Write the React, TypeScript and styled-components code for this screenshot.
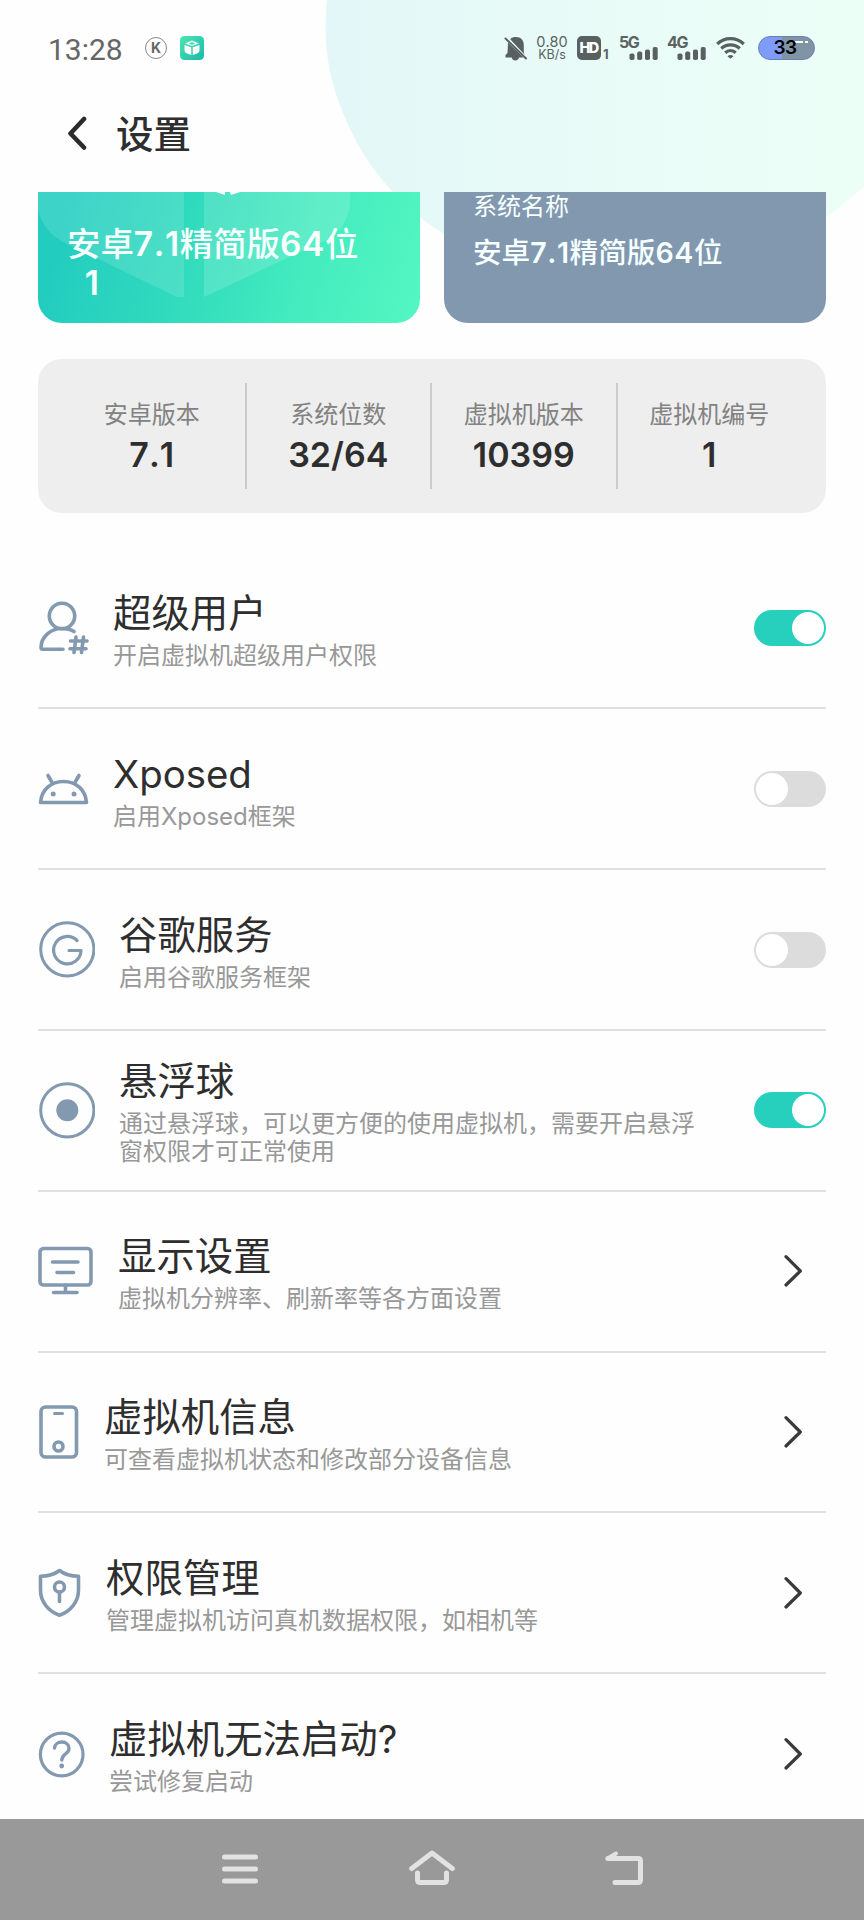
import React from "react";
import styled, { createGlobalStyle } from "styled-components";

const GlobalStyle = createGlobalStyle`
  * { box-sizing: border-box; }
  body {
    margin: 0;
    background: #fefefe;
    font-family: Inter, "Noto Sans CJK SC", sans-serif;
    font-kerning: none;
    color: #2e2e2e;
  }
`;

const SLATE = "#8299af";

const Screen = styled.div`
  position: relative;
  width: 864px;
  height: 1920px;
  overflow: hidden;
  display: flex;
  flex-direction: column;
`;

const Backdrop = styled.svg`
  position: absolute;
  top: 0;
  left: 0;
  z-index: -1;
`;

/* ---------- status bar ---------- */

const StatusBar = styled.header`
  height: 96px;
  padding: 0 49px 0 48px;
  display: flex;
  align-items: center;
  color: #5a6262;
`;

const Clock = styled.span`
  width: 74px;
  margin-right: 23px;
  font: 400 30px/36px Roboto, sans-serif;
  color: #666;
  white-space: nowrap;
  padding-top: 4px;
`;

const KBadge = styled.span`
  width: 22px;
  height: 22px;
  margin-right: 13px;
  border: 1px solid #888;
  border-radius: 50%;
  display: flex;
  align-items: center;
  justify-content: center;
  font: 700 14px/20px Inter, sans-serif;
  color: #666;
`;

const Spacer = styled.div`
  flex: 1;
`;

const NetSpeed = styled.div`
  width: 32px;
  margin: 0 9px 0 8px;
  text-align: center;
  font-size: 12.5px;
  line-height: 13px;
  white-space: nowrap;
  display: flex;
  flex-direction: column;
  align-items: center;
`;

const Rate = styled.span`
  font-size: 14.5px;
`;

const HdBadge = styled.span`
  width: 24px;
  height: 24px;
  border-radius: 5px;
  background: #596060;
  color: #fff;
  font: 800 14.5px/24px Inter, sans-serif;
  letter-spacing: -1.6px;
  text-indent: -1px;
  text-align: center;
`;

const SimIndex = styled.span`
  width: 8px;
  margin: 12px 9px 0 2px;
  font: 700 13px/12px Inter, sans-serif;
`;

const Signal = styled.span`
  width: 39px;
  height: 24px;
  margin-right: 9px;
  display: grid;
  grid-template: 24px / 39px;
  > * { grid-area: 1 / 1; }
`;

const Generation = styled.span`
  margin-left: -1px;
  font: 700 16px/12px Inter, sans-serif;
  letter-spacing: -1.4px;
`;

const Battery = styled.span`
  width: 57px;
  height: 24px;
  margin-left: 13px;
  padding-right: 3px;
  border: 1.5px solid #6b7fb5;
  border-radius: 12px;
  background:
    linear-gradient(#fff, #fff) 36px 4px / 8px 2px no-repeat,
    linear-gradient(#fff, #fff) 46px 4px / 3px 2px no-repeat,
    linear-gradient(90deg, #809cfb 0 42%, #8094a4 42%);
  color: #000;
  font: 600 19px/22px Inter, sans-serif;
  letter-spacing: -0.5px;
  text-align: center;
`;

/* ---------- title bar ---------- */

const TitleBar = styled.div`
  height: 96px;
  padding: 0 0 19px 66px;
  display: flex;
  align-items: center;
  gap: 27px;
`;

const PageTitle = styled.h1`
  margin: 0;
  font-size: 37.5px;
  font-weight: 500;
  line-height: 44px;
`;

/* ---------- summary cards ---------- */

const Content = styled.main`
  flex: 1;
  min-height: 0;
  overflow: hidden;
  padding: 0 38px;
`;

const Cards = styled.section`
  display: grid;
  grid-template-columns: 1fr 1fr;
  gap: 24px;
  height: 131px;
`;

const Card = styled.div<{ $accent?: boolean }>`
  position: relative;
  overflow: hidden;
  border-radius: 0 0 24px 24px;
  color: #f7ffff;
  background: ${(p) =>
    p.$accent
      ? "linear-gradient(106deg, #22cdc0 8%, #31dbbd 40%, #43ebbe 68%, #54f7c1 100%)"
      : "#8198af"};
  padding: ${(p) => (p.$accent ? "33px 29px" : "0 29px")};
`;

const CardArt = styled.svg`
  position: absolute;
  left: 0;
  top: 0;
`;

const CardName = styled.div`
  position: relative;
  font-size: 33.4px;
  font-weight: 500;
  line-height: 38.5px;
  white-space: pre;
`;

const Digits = styled.span`
  font-weight: 600;
  letter-spacing: 0.02em;
`;

const CardLabel = styled.div`
  font-size: 24px;
  line-height: 30px;
`;

const CardValue = styled.div`
  margin-top: 14px;
  font-size: 28.6px;
  font-weight: 500;
  line-height: 34px;
`;

const Stats = styled.section`
  height: 154px;
  margin-top: 36px;
  padding: 24px 25px 24px 21px;
  border-radius: 24px;
  background: #eeeeee;
  display: grid;
  grid-template-columns: repeat(4, 1fr);
`;

const Stat = styled.div`
  display: flex;
  flex-direction: column;
  align-items: center;
  padding-top: 17px;
  & + & { border-left: 2px solid #cbcbcb; }
`;

const StatLabel = styled.span`
  font-size: 24px;
  line-height: 30px;
  color: #828282;
`;

const StatValue = styled.span`
  margin-top: 5px;
  font-size: 34px;
  font-weight: 600;
  line-height: 40px;
`;

/* ---------- settings list ---------- */

const List = styled.ul`
  list-style: none;
  margin: 35.6px 0 0;
  padding: 0;
`;

const Row = styled.li`
  height: 160.8px;
  display: flex;
  align-items: center;
  border-bottom: 2px solid #e0e0e0;
`;

const RowText = styled.div`
  margin-left: 24px;
  padding-top: 5px;
  width: 580px;
`;

const RowTitle = styled.div`
  font-size: 38.4px;
  line-height: 44px;
  font-weight: 400;
`;

const RowNote = styled.div`
  margin-top: 7px;
  font-size: 24px;
  line-height: 28px;
  color: #989898;
`;

const Toggle = styled.span<{ $on: boolean }>`
  width: 72px;
  height: 36px;
  padding: 2px;
  border-radius: 18px;
  background: ${(p) => (p.$on ? "#27d0bc" : "#dcdcdc")};
  display: flex;
  justify-content: ${(p) => (p.$on ? "flex-end" : "flex-start")};
`;

const Knob = styled.span`
  width: 32px;
  height: 32px;
  border-radius: 50%;
  background: #fff;
`;

const Chevron = styled.svg`
  margin-right: 22px;
`;

/* ---------- navigation bar ---------- */

const NavBar = styled.nav`
  height: 101px;
  padding: 0 144px 2px;
  background: #999;
  display: flex;
  align-items: center;
`;

const NavButton = styled.span`
  flex: 1;
  display: flex;
  justify-content: center;
`;

type IconProps = { w: number; h: number; children: React.ReactNode };

const IconSvg = styled.svg`
  flex: none;
  fill: none;
  stroke: ${SLATE};
  stroke-linecap: round;
  stroke-linejoin: round;
`;

const Dot = styled.circle`
  fill: ${SLATE};
  stroke: none;
`;

const LineIcon = ({ w, h, children }: IconProps) => (
  <IconSvg width={w} height={h} viewBox={`0 0 ${w} ${h}`} strokeWidth="3.600">
    {children}
  </IconSvg>
);

const UserIcon = () => (
  <LineIcon w={51} h={56}>
    <circle cx="24" cy="16" r="12.700" />
    <path d="M36 31.500C32 29 28 28.500 24 28.500 12.500 28.500 3 37 3 47.500Q3 49.300 4.800 49.300H25" />
    <path d="M32.500 41H49M32 48.800H48M38 37L36 52.500M45.500 37L43.500 52.500" />
  </LineIcon>
);

const AndroidIcon = () => (
  <LineIcon w={51} h={36}>
    <path d="M2.500 31.500C3.500 18.500 13 10.500 25.500 10.500S47.500 18.500 48.500 31.500Z" />
    <path d="M10 4.500L13.500 10.500M41 4.500L37.500 10.500" />
    <Dot cx="15.200" cy="23" r="2.500" />
    <Dot cx="36" cy="23" r="2.500" />
  </LineIcon>
);

const GoogleIcon = () => (
  <LineIcon w={57} h={57}>
    <circle cx="29.300" cy="28.300" r="26.600" strokeWidth="3" />
    <path d="M39 19.500A13.700 13.700 0 1 0 43 29.500H31" strokeWidth="3.200" />
  </LineIcon>
);

const BallIcon = () => (
  <LineIcon w={57} h={57}>
    <circle cx="29.300" cy="28.300" r="26.600" strokeWidth="3" />
    <Dot cx="29.300" cy="28.300" r="11" />
  </LineIcon>
);

const DisplayIcon = () => (
  <LineIcon w={56} h={50}>
    <rect x="2" y="2.500" width="51" height="36.500" rx="3.500" />
    <path d="M27.500 39V45M15.500 46.500H39M14.500 16H40M19 26.500H35.500" />
  </LineIcon>
);

const PhoneIcon = () => (
  <LineIcon w={42} h={56}>
    <rect x="3" y="3" width="35.500" height="50" rx="4.500" />
    <path d="M16.500 9.500H24.500" strokeWidth="3" />
    <circle cx="20.500" cy="42.500" r="4.500" />
  </LineIcon>
);

const ShieldIcon = () => (
  <LineIcon w={44} h={50}>
    <path d="M21.500 2.500C16 6.800 9.500 8.200 2.500 8.200V22C2.500 34.500 11 43.500 21.500 47.300 32 43.500 40.500 34.500 40.500 22V8.200C33.500 8.200 27 6.800 21.500 2.500Z" />
    <circle cx="21.500" cy="19" r="5" />
    <path d="M21.500 24.500V33.500" />
  </LineIcon>
);

const HelpIcon = () => (
  <LineIcon w={47} h={48}>
    <circle cx="23.700" cy="24.500" r="21.300" strokeWidth="3.200" />
    <path d="M16.500 18C17 10 31 10 31 18.500 31 24 24 23.500 23.800 30" strokeWidth="3.400" />
    <Dot cx="23.700" cy="36" r="2.400" />
  </LineIcon>
);

const SignalBars = () => (
  <svg width="39" height="24" viewBox="0 0 39 24" fill="#596060">
    <rect x="9.500" y="17.500" width="5" height="6.500" rx="1.800" />
    <rect x="17.200" y="15.500" width="5" height="8.500" rx="1.800" />
    <rect x="25" y="13.500" width="5" height="10.500" rx="1.800" />
    <rect x="32.700" y="11" width="5" height="13" rx="1.800" />
  </svg>
);

type Setting = {
  icon: React.ReactNode;
  title: string;
  note: string;
  on?: boolean;
};

const settings: Setting[] = [
  { icon: <UserIcon />, title: "超级用户", note: "开启虚拟机超级用户权限", on: true },
  { icon: <AndroidIcon />, title: "Xposed", note: "启用Xposed框架", on: false },
  { icon: <GoogleIcon />, title: "谷歌服务", note: "启用谷歌服务框架", on: false },
  {
    icon: <BallIcon />,
    title: "悬浮球",
    note: "通过悬浮球，可以更方便的使用虚拟机，需要开启悬浮窗权限才可正常使用",
    on: true,
  },
  { icon: <DisplayIcon />, title: "显示设置", note: "虚拟机分辨率、刷新率等各方面设置" },
  { icon: <PhoneIcon />, title: "虚拟机信息", note: "可查看虚拟机状态和修改部分设备信息" },
  { icon: <ShieldIcon />, title: "权限管理", note: "管理虚拟机访问真机数据权限，如相机等" },
  { icon: <HelpIcon />, title: "虚拟机无法启动?", note: "尝试修复启动" },
];

const stats = [
  ["安卓版本", "7.1"],
  ["系统位数", "32/64"],
  ["虚拟机版本", "10399"],
  ["虚拟机编号", "1"],
];

const SystemName = () => (
  <>
    安卓<Digits>7.1</Digits>精简版<Digits>64</Digits>位
  </>
);

export default function App() {
  return (
    <Screen>
      <GlobalStyle />
      <Backdrop width="864" height="340" viewBox="0 0 864 340">
        <defs>
          <linearGradient id="sky" x1="325" x2="864" y1="0" y2="0" gradientUnits="userSpaceOnUse">
            <stop offset="0" stopColor="#e3f7f8" />
            <stop offset="0.5" stopColor="#e8fbf7" />
            <stop offset="1" stopColor="#ecfff7" />
          </linearGradient>
        </defs>
        <path
          d="M327 0C322 50 330 88 353 135C370 170 400 205 438 230C540 300 730 295 826 218L864 187V0Z"
          fill="url(#sky)"
        />
      </Backdrop>

      <StatusBar>
        <Clock>13:28</Clock>
        <KBadge>K</KBadge>
        <svg width="24" height="24" viewBox="0 0 24 24">
          <defs>
            <linearGradient id="app" x1="0" y1="0" x2="1" y2="1">
              <stop offset="0" stopColor="#4ce5b0" />
              <stop offset="1" stopColor="#18b9ae" />
            </linearGradient>
          </defs>
          <rect width="24" height="24" rx="4.500" fill="url(#app)" />
          <path d="M4.500 9L11.300 11.200V19L7 17.500Q4.500 16.500 4.500 14.500ZM19.500 9L12.700 11.200V19L17 17.500Q19.500 16.500 19.500 14.500Z" fill="#fff" />
          <path d="M5 7.500L12 4.500 19 7.500 12 10Z" fill="#fff" opacity="0.9" />
          <path d="M9 7.500L12 6 15 7.500 12 8.700Z" fill="#40d9b2" />
        </svg>
        <Spacer />
        <svg width="24" height="25" viewBox="0 0 24 25" fill="#596060">
          <path d="M6.200 3.200C8 1.300 9.500 1 12 1 17 1 19.800 4.500 19.800 9V16.500L20.500 18.500ZM4 6.500L19.500 21.500H15C14.500 23.500 13.200 24.500 11.300 24.500S8.200 23.500 7.700 21.500H1.500V19L3.500 17Z" />
          <path d="M1.500 2.500L22 22.500" stroke="#596060" strokeWidth="2" strokeLinecap="round" />
        </svg>
        <NetSpeed>
          <Rate>0.80</Rate>
          <span>KB/s</span>
        </NetSpeed>
        <HdBadge>HD</HdBadge>
        <SimIndex>1</SimIndex>
        <Signal>
          <Generation>5G</Generation>
          <SignalBars />
        </Signal>
        <Signal>
          <Generation>4G</Generation>
          <SignalBars />
        </Signal>
        <svg width="29" height="24" viewBox="0 0 29 24" fill="none" stroke="#596060" strokeWidth="3.200">
          <path d="M1.200 8C8.800 0.800 20.200 0.800 27.800 8" />
          <path d="M5.300 12.500C10.500 7.600 18.500 7.600 23.700 12.500" />
          <path d="M9.200 16.800C12.300 14 16.700 14 19.800 16.800" />
          <path d="M11.500 20.200Q14.500 17.700 17.500 20.200L14.500 22.800Z" fill="#596060" stroke="none" />
        </svg>
        <Battery>33</Battery>
      </StatusBar>

      <TitleBar>
        <svg width="23" height="38" viewBox="0 0 23 38" fill="none" stroke="#2b2b2b" strokeWidth="4.600" strokeLinecap="round" strokeLinejoin="round">
          <path d="M18 3L4.500 17.500 18 31.500" />
        </svg>
        <PageTitle>设置</PageTitle>
      </TitleBar>

      <Content>
        <Cards>
          <Card $accent>
            <CardArt width="382" height="131" viewBox="0 0 382 131" fill="#fff">
              <path d="M0 0H146V105H139L25 50Q6 40 0 18Z" opacity="0.13" />
              <path d="M166 0H312V14Q308 36 292 46L166 105Z" opacity="0.15" />
              <path d="M178 0H187V3ZM192 0H202L193 3Z" />
            </CardArt>
            <CardName>
              <SystemName />
              {"\n  "}
              <Digits>1</Digits>
            </CardName>
          </Card>
          <Card>
            <CardLabel>系统名称</CardLabel>
            <CardValue>
              <SystemName />
            </CardValue>
          </Card>
        </Cards>

        <Stats>
          {stats.map(([label, value]) => (
            <Stat key={label}>
              <StatLabel>{label}</StatLabel>
              <StatValue>{value}</StatValue>
            </Stat>
          ))}
        </Stats>

        <List>
          {settings.map(({ icon, title, note, on }) => (
            <Row key={title}>
              {icon}
              <RowText>
                <RowTitle>{title}</RowTitle>
                <RowNote>{note}</RowNote>
              </RowText>
              <Spacer />
              {on === undefined ? (
                <Chevron width="20" height="34" viewBox="0 0 20 34" fill="none" stroke="#3a3a3a" strokeWidth="3.200" strokeLinecap="round" strokeLinejoin="round">
                  <path d="M2 2.700L16.300 17 2 31" />
                </Chevron>
              ) : (
                <Toggle $on={on}>
                  <Knob />
                </Toggle>
              )}
            </Row>
          ))}
        </List>
      </Content>

      <NavBar>
        <NavButton>
          <svg width="36" height="30" viewBox="0 0 36 30" stroke="#e2e2e2" strokeWidth="5" strokeLinecap="round">
            <path d="M2.500 3H33.500M2.500 15H33.500M2.500 27H33.500" />
          </svg>
        </NavButton>
        <NavButton>
          <svg width="46" height="40" viewBox="0 0 46 40" fill="none" stroke="#e2e2e2" strokeWidth="5" strokeLinecap="round" strokeLinejoin="round">
            <path d="M2.700 19.500L23 4 43.300 19.500" />
            <path d="M8.500 24V30.500Q8.500 33.500 11.500 33.500H34.500Q37.500 33.500 37.500 30.500V24" />
          </svg>
        </NavButton>
        <NavButton>
          <svg width="40" height="40" viewBox="0 0 40 40" fill="none" stroke="#e2e2e2" strokeWidth="5" strokeLinecap="round" strokeLinejoin="round">
            <path d="M4 9.500H34Q36.500 9.500 36.500 12V31Q36.500 33.500 34 33.500H11" />
            <path d="M3.500 9.500L12 4.500" strokeWidth="4" />
          </svg>
        </NavButton>
      </NavBar>
    </Screen>
  );
}
